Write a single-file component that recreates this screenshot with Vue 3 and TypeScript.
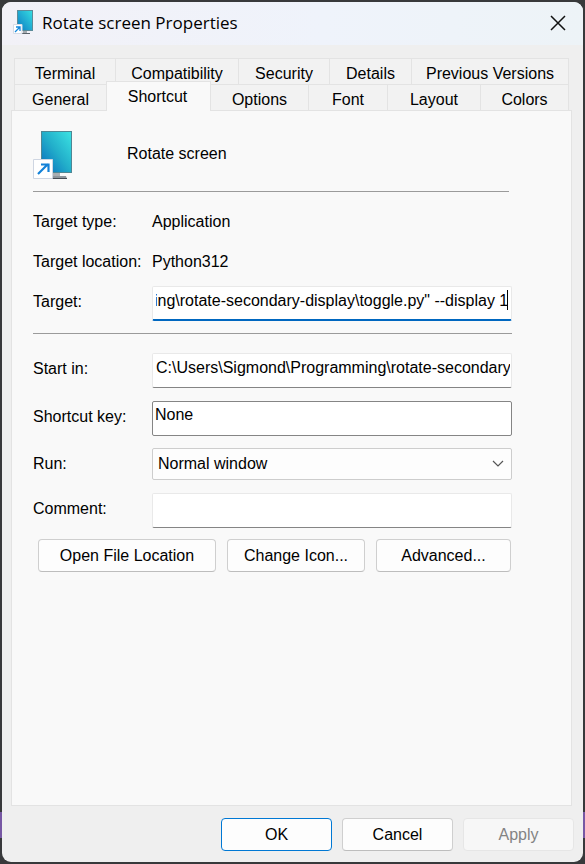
<script setup lang="ts">
import { onMounted, ref } from 'vue'

const backTabs: string[] = ['Terminal', 'Compatibility', 'Security', 'Details', 'Previous Versions']
const frontTabs: string[] = ['General', 'Shortcut', 'Options', 'Font', 'Layout', 'Colors']
const activeTab = ref('Shortcut')

const target = ref('C:\\Users\\Sigmond\\Programming\\rotate-secondary-display\\toggle.py" --display 1')
const startIn = ref('C:\\Users\\Sigmond\\Programming\\rotate-secondary-display')
const shortcutKey = ref('None')
const runMode = ref('Normal window')
const comment = ref('')

const targetInput = ref<HTMLInputElement | null>(null)

onMounted(() => {
  const el = targetInput.value
  if (!el) return
  el.focus()
  el.setSelectionRange(el.value.length, el.value.length)
  el.scrollLeft = el.scrollWidth
})
</script>

<template>
  <div class="desktop">
    <main class="window">
      <header class="titlebar">
        <svg class="title-icon" viewBox="0 0 20 25" aria-hidden="true">
          <defs>
            <linearGradient id="screen-small" x1="1" y1="0" x2="0" y2="1">
              <stop offset="0" stop-color="#35dbe0" />
              <stop offset="1" stop-color="#0c7cc4" />
            </linearGradient>
          </defs>
          <path d="M10 20h4v3h-4z" fill="#a5abb0" />
          <path d="M9 23h8v1H9z" fill="#5b636b" />
          <path d="M4 0h16v21H4z" fill="#5b8b99" />
          <path d="M5 1h14v19H5z" fill="url(#screen-small)" />
          <path d="M.5 14.500h8.500v9H.5z" fill="#fff" stroke="#d5dbe6" />
          <path d="M2 22l5-5M3 17h4v4" fill="none" stroke="#1287dc" stroke-width="1.3" />
        </svg>
        <h1>Rotate screen Properties</h1>
        <button class="close" type="button" aria-label="Close">
          <svg viewBox="0 0 16 16" aria-hidden="true">
            <path d="M1 1l14 14M15 1L1 15" fill="none" stroke="#111" stroke-width="1.5" />
          </svg>
        </button>
      </header>

      <nav class="tabs" role="tablist">
        <div class="tab-row back">
          <button
            v-for="tab in backTabs"
            :key="tab"
            class="tab"
            type="button"
            role="tab"
            :aria-selected="tab === activeTab"
            @click="activeTab = tab"
          >{{ tab }}</button>
        </div>
        <div class="tab-row front">
          <button
            v-for="tab in frontTabs"
            :key="tab"
            class="tab"
            :class="{ active: tab === activeTab }"
            type="button"
            role="tab"
            :aria-selected="tab === activeTab"
            @click="activeTab = tab"
          >{{ tab }}</button>
        </div>
      </nav>

      <section class="panel">
        <div class="identity">
          <svg class="app-icon" viewBox="0 0 40 50" aria-hidden="true">
            <defs>
              <linearGradient id="screen-large" x1="1" y1="0" x2="0" y2="1">
                <stop offset="0" stop-color="#3be2e2" />
                <stop offset="0.5" stop-color="#22aeca" />
                <stop offset="1" stop-color="#0869bd" />
              </linearGradient>
            </defs>
            <path d="M19 42h8v5h-8z" fill="#a9aeb2" />
            <path d="M16 46h17l1 3H16z" fill="#8d959c" />
            <path d="M16 48h18v1H16z" fill="#454c54" />
            <path d="M8 1h31v42H8z" fill="#4f8794" />
            <path d="M9 2h29v40H9z" fill="url(#screen-large)" />
            <path d="M.5 29.500h19v19H.5z" fill="#fff" stroke="#cfd6e2" />
            <path d="M5 44L15 34M8 34.500h7.500V42" fill="none" stroke="#1482d8" stroke-width="2.200" />
          </svg>
          <span>Rotate screen</span>
        </div>
        <hr class="rule first" />

        <dl class="facts">
          <dt>Target type:</dt>
          <dd>Application</dd>
          <dt>Target location:</dt>
          <dd>Python312</dd>
        </dl>

        <div class="field">
          <label for="target">Target:</label>
          <div class="focus-box">
            <input id="target" ref="targetInput" v-model="target" class="box focused" type="text" spellcheck="false" />
            <span class="caret" aria-hidden="true"></span>
          </div>
        </div>
        <hr class="rule second" />

        <div class="field start">
          <label for="start-in">Start in:</label>
          <input id="start-in" v-model="startIn" class="box" type="text" spellcheck="false" />
        </div>
        <div class="field key">
          <label for="shortcut-key">Shortcut key:</label>
          <input id="shortcut-key" v-model="shortcutKey" class="box outlined" type="text" />
        </div>
        <div class="field run">
          <label for="run">Run:</label>
          <div class="select-box">
            <select id="run" v-model="runMode">
              <option>Normal window</option>
            </select>
            <svg class="chevron" viewBox="0 0 12 8" aria-hidden="true">
              <path d="M1 1l5 5 5-5" fill="none" stroke="#555" stroke-width="1.200" />
            </svg>
          </div>
        </div>
        <div class="field comment">
          <label for="comment">Comment:</label>
          <input id="comment" v-model="comment" class="box" type="text" />
        </div>

        <div class="actions">
          <button class="btn" type="button">Open File Location</button>
          <button class="btn" type="button">Change Icon...</button>
          <button class="btn" type="button">Advanced...</button>
        </div>
      </section>

      <footer class="footer">
        <button class="btn primary" type="button">OK</button>
        <button class="btn" type="button">Cancel</button>
        <button class="btn" type="button" disabled>Apply</button>
      </footer>
    </main>
  </div>
</template>

<style>
body {
  background: #38393b;
}
</style>

<style scoped>
* {
  box-sizing: border-box;
}

.desktop {
  display: flex;
  min-height: 100vh;
  padding: 2px;
  background: linear-gradient(to bottom, #38393b 94%, #7758a4 94%, #7758a4 97%, #38393b 97%);
  font: 16px/20px "Liberation Sans", Arial, sans-serif;
  color: #000;
}

.window {
  display: flex;
  flex: 1;
  flex-direction: column;
  min-width: 0;
  border-radius: 9px;
  overflow: hidden;
  background: #efefef;
}

button,
input,
select {
  font: inherit;
  color: inherit;
  margin: 0;
}

.titlebar {
  display: flex;
  align-items: center;
  height: 43px;
  padding: 0 17px 2px 11px;
  background: linear-gradient(to right, #f2f1f7, #eff3fb 55%, #edf3f7);
}

.title-icon {
  width: 20px;
  height: 25px;
}

h1 {
  flex: 1;
  margin: 0 0 0 9px;
  font: 400 17px/24px "Open Sans", "Noto Sans", sans-serif;
}

.close {
  display: flex;
  padding: 0;
  border: 0;
  background: none;
}

.close svg {
  width: 16px;
  height: 16px;
}

.tabs {
  margin: 13px 14px 0 12px;
}

.tab-row {
  display: grid;
  height: 26px;
  border-left: 1px solid #e3e3e3;
}

.back {
  grid-template-columns: 101fr 123fr 91fr 82fr 157fr;
}

.front {
  grid-template-columns: 92fr 104fr 98fr 79fr 93fr 88fr;
}

.tab {
  min-width: 0;
  padding: 4px 0 0;
  border: solid #e3e3e3;
  border-width: 1px 1px 0 0;
  background: #f2f2f2;
  white-space: nowrap;
}

.tab.active {
  z-index: 1;
  margin: -3px 0 -1px -1px;
  padding: 0 2px 0 0;
  border-left-width: 1px;
  background: #f9f9f9;
}

.panel {
  flex: 1;
  margin: 0 11px 0 9px;
  padding: 19px 59px 19px 21px;
  border: 1px solid #e3e3e3;
  background: #f9f9f9;
}

.identity {
  display: flex;
  gap: 54px;
  height: 50px;
}

.identity span {
  padding-top: 14px;
}

.app-icon {
  width: 40px;
  height: 50px;
}

.rule {
  height: 1px;
  border: 0;
  background: #9b9b9b;
}

.first {
  margin: 11px 3px 0 0;
}

.second {
  margin: 12px 0 0;
}

.facts,
.field {
  display: grid;
  grid-template-columns: 119px minmax(0, 1fr);
  align-items: center;
}

.facts {
  grid-auto-rows: 40px;
  margin: 10px 0 4px;
  white-space: nowrap;
}

.facts dd {
  margin: 0;
}

.field label {
  padding-bottom: 4px;
}

.start {
  margin-top: 19px;
}

.key {
  margin-top: 13px;
}

.run {
  margin-top: 12px;
}

.run label {
  padding-bottom: 0;
}

.comment {
  margin-top: 13px;
}

.box {
  display: block;
  width: 100%;
  height: 35px;
  padding: 0 1px 5px 3px;
  border: 1px solid #e9e9e9;
  border-bottom-color: #858585;
  border-radius: 2px;
  outline: 0;
  background: #fff;
}

.box.focused {
  padding-right: 3px;
  border-bottom: 2px solid #0067c0;
  caret-color: transparent;
}

.box.outlined {
  padding: 0 2px 8px;
  border-color: #858585;
}

.focus-box,
.select-box {
  position: relative;
}

.caret {
  position: absolute;
  top: 4px;
  right: 4px;
  width: 1px;
  height: 20px;
  background: #000;
}

select {
  display: block;
  width: 100%;
  height: 32px;
  padding: 0 28px 0 5px;
  border: 1px solid #cdcdcd;
  border-radius: 2px;
  appearance: none;
  background: #fdfdfd;
}

.chevron {
  position: absolute;
  top: 12px;
  right: 8px;
  width: 12px;
  height: 8px;
  pointer-events: none;
}

.actions {
  display: grid;
  grid-template-columns: 178fr 138fr 135fr;
  gap: 11px;
  margin: 11px 1px 0 5px;
}

.btn {
  height: 33px;
  padding: 0;
  border: 1px solid #cfcfcf;
  border-bottom-color: #bdbdbd;
  border-radius: 4px;
  background: #fdfdfd;
  white-space: nowrap;
}

.btn.primary {
  border-color: #0078d4;
}

.btn:disabled {
  border-color: #e6e6e6;
  background: #f7f7f7;
  color: #838383;
}

.footer {
  display: grid;
  grid-template-columns: repeat(3, 111px);
  justify-content: end;
  gap: 10px;
  padding: 12px 9px 11px;
}
</style>
